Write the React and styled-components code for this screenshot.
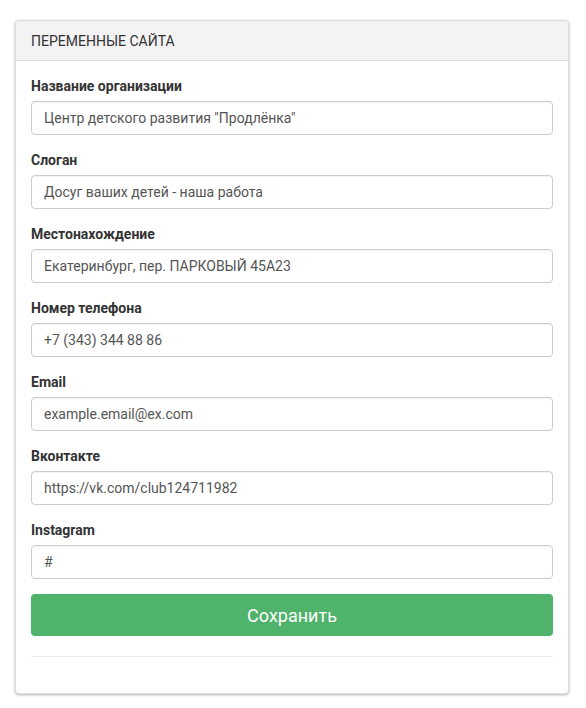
import React from 'react';
import styled, { createGlobalStyle } from 'styled-components';

const GlobalStyle = createGlobalStyle`
    body {
        margin: 0;
        background: #fff;
        font-family: Roboto, "Liberation Sans", Arial, sans-serif;
    }
`;

const fields = [
    { label: 'Название организации', value: 'Центр детского развития "Продлёнка"' },
    { label: 'Слоган', value: 'Досуг ваших детей - наша работа' },
    { label: 'Местонахождение', value: 'Екатеринбург, пер. ПАРКОВЫЙ 45А23' },
    { label: 'Номер телефона', value: '+7 (343) 344 88 86' },
    { label: 'Email', value: 'example.email@ex.com' },
    { label: 'Вконтакте', value: 'https://vk.com/club124711982' },
    { label: 'Instagram', value: '#' },
];

const App = () => {
    return (
        <Page>
            <GlobalStyle />
            <Panel>
                <PanelHeading>Переменные сайта</PanelHeading>
                <PanelBody>
                    {fields.map((f) => (
                        <FormGroup key={f.label}>
                            <Label>{f.label}</Label>
                            <Input type="text" defaultValue={f.value} />
                        </FormGroup>
                    ))}
                    <SaveButton type="button">Сохранить</SaveButton>
                    <Divider />
                </PanelBody>
            </Panel>
        </Page>
    );
};

const Page = styled.div`
    padding: 20px 17px 15px 15px;
`;

const Panel = styled.div`
    background: #fff;
    border: 1px solid #dcdcdc;
    border-radius: 4px;
    box-shadow: 0 1px 3px rgba(0, 0, 0, 0.3);
    overflow: hidden;
`;

const PanelHeading = styled.div`
    height: 39px;
    display: flex;
    align-items: center;
    padding: 0 15px;
    background: #f3f3f3;
    border-bottom: 1px solid #dddddd;
    font-size: 14px;
    color: #333;
    text-transform: uppercase;
`;

const PanelBody = styled.div`
    padding: 16px 15px 36px;
`;

const FormGroup = styled.div`
    display: flex;
    flex-direction: column;
    margin-bottom: 16px;

    &:last-of-type {
        margin-bottom: 15px;
    }
`;

const Label = styled.label`
    font-size: 14px;
    font-weight: 700;
    line-height: 19px;
    color: #333;
    margin-bottom: 5px;
`;

const Input = styled.input`
    box-sizing: border-box;
    width: 100%;
    height: 34px;
    padding: 0 12px;
    border: 1px solid #cccccc;
    border-radius: 4px;
    background: #fff;
    font-family: Roboto, "Liberation Sans", Arial, sans-serif;
    font-size: 14px;
    color: #555;
    box-shadow: inset 0 1px 1px rgba(0, 0, 0, 0.05);
    outline: none;
`;

const SaveButton = styled.button`
    display: block;
    width: 100%;
    height: 42px;
    border: none;
    border-radius: 4px;
    background: #4fb36c;
    color: #fff;
    font-family: Roboto, "Liberation Sans", Arial, sans-serif;
    font-size: 18px;
    cursor: pointer;
`;

const Divider = styled.hr`
    border: none;
    border-top: 1px solid #eeeeee;
    margin: 20px 0 0;
`;

export default App;
